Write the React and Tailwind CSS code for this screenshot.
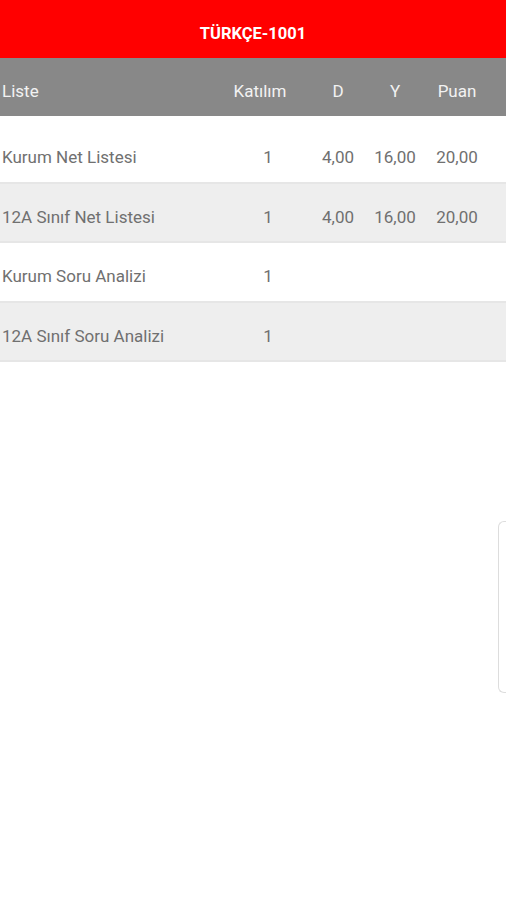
import React from 'react';

const rows = [
  { name: 'Kurum Net Listesi', k: '1', d: '4,00', y: '16,00', p: '20,00' },
  { name: '12A Sınıf Net Listesi', k: '1', d: '4,00', y: '16,00', p: '20,00' },
  { name: 'Kurum Soru Analizi', k: '1', d: '', y: '', p: '' },
  { name: '12A Sınıf Soru Analizi', k: '1', d: '', y: '', p: '' },
];

const Cells = ({ name, k, d, y, p, kPad }) => (
  <>
    <div className="flex-1 pl-[2px] whitespace-nowrap">{name}</div>
    <div className={`w-[72px] text-center ${kPad ? 'pl-[12px]' : 'pr-[4px]'}`}>{k}</div>
    <div className="w-[12px]" />
    <div className="w-[56px] text-center">{d}</div>
    <div className="w-[58px] text-center">{y}</div>
    <div className="w-[66px] text-center">{p}</div>
    <div className="w-[16px]" />
  </>
);

export default function App() {
  return (
    <div className="relative min-h-[900px] bg-white text-[17px]" style={{ fontFamily: 'Roboto, "Liberation Sans", sans-serif' }}>
      <header className="h-[58px] bg-[#ff0000] flex items-center justify-center pt-[10px]">
        <span className="text-white font-bold text-[16.5px]">TÜRKÇE-1001</span>
      </header>

      <div className="h-[58px] bg-[#888888] text-[#f2f2f2] flex items-center pt-[10px]">
        <Cells name="Liste" k="Katılım" d="D" y="Y" p="Puan" />
      </div>

      <div className="mt-[8px] text-[#707070]">
        {rows.map((r, i) => (
          <div
            key={r.name}
            className={`h-[59.5px] flex items-center pt-[10px] border-b-2 border-[#e6e6e6] ${i % 2 ? 'bg-[#eeeeee]' : 'bg-white'}`}
          >
            <Cells {...r} kPad />
          </div>
        ))}
      </div>

      <div className="absolute right-0 top-[521px] w-[8px] h-[172px] border border-r-0 border-[#dddddd] rounded-l-[6px]" />
    </div>
  );
}
